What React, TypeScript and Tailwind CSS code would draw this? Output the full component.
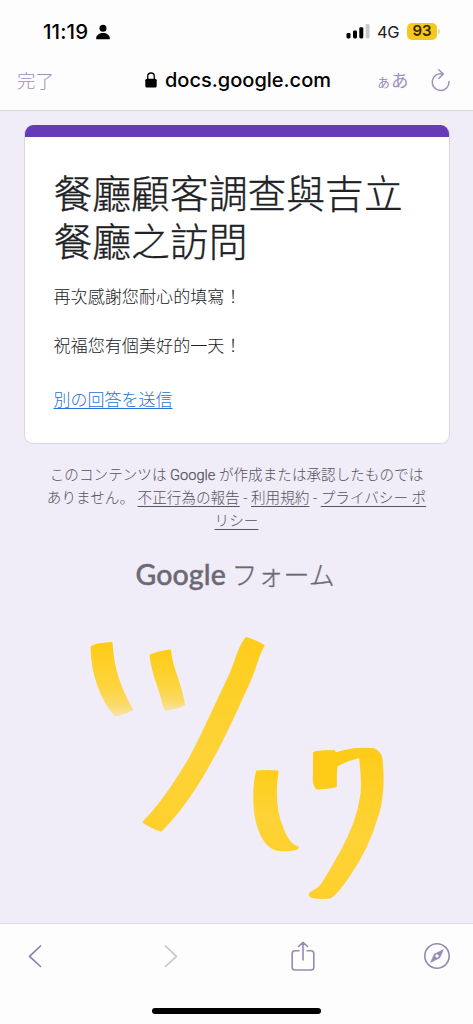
import type { ReactNode } from "react";

const CJK_TC = "font-['Noto_Sans_CJK_TC',sans-serif]";
const CJK_JP = "font-[Roboto,'Noto_Sans_CJK_JP',sans-serif]";

function StatusBar() {
  return (
    <div className="flex h-[62px] items-center justify-between pr-[33px] pl-[43px]">
      <div className="flex items-center gap-[5px] text-black">
        <span className="w-[48px] pt-px text-[20.5px] leading-6 font-medium tracking-[0.1px] whitespace-nowrap">11:19</span>
        <svg className="mt-[2px]" width="14" height="16" viewBox="0 0 14 16" fill="currentColor">
          <circle cx="7" cy="4.2" r="3.5" />
          <path d="M0.3 15.3C-0.6 11.5 3 9 7 9S14.600 11.5 13.700 15.3Z" />
        </svg>
      </div>
      <div className="flex items-center">
        <svg width="25" height="16" viewBox="0 0 25 16">
          <rect x="0.5" y="10" width="4" height="5.5" rx="1.4" />
          <rect x="7" y="7.5" width="4" height="8" rx="1.4" />
          <rect x="13.3" y="4.2" width="4" height="11.3" rx="1.4" />
          <rect x="19.6" y="1" width="4" height="14.5" rx="1.4" fill="#c9c9c9" />
        </svg>
        <span className="ml-[6px] w-[24px] pt-[2px] text-[16.5px] leading-5 tracking-[-0.4px] text-[#222]">4G</span>
        <span className="ml-[6px] flex h-[17px] w-[30px] items-center justify-center rounded-[5px] bg-[#f6c81e] pt-px text-[15px] font-semibold text-[#332600]">93</span>
        <span className="ml-px h-[5px] w-[2px] rounded-r-full bg-[#e4dcae]" />
      </div>
    </div>
  );
}

function NavBar() {
  return (
    <div className="flex h-[48px] items-start pt-[5px]">
      <button className="-mt-px ml-[17px] h-[28px] w-[38px] text-left font-['Noto_Sans_CJK_JP',sans-serif] text-[18.5px] leading-[28px] font-light whitespace-nowrap text-[#a08fbd]">完了</button>
      <div className="ml-[90px] flex h-[26px] items-center">
        <svg width="12" height="16" viewBox="0 0 12 16">
          <rect x="0.3" y="6.7" width="11.4" height="8.8" rx="1.5" />
          <path d="M2.7 7.5V4.3a3.3 3.3 0 0 1 6.6 0v3.2" fill="none" stroke="#000" strokeWidth="1.3" />
        </svg>
        <span className="ml-[8px] w-[166px] text-[20px] leading-[26px] font-medium whitespace-nowrap text-black">docs.google.com</span>
      </div>
      <div className="ml-[45px] flex h-[28px] w-[34px] items-baseline font-['Noto_Sans_CJK_JP',sans-serif] leading-[26px] whitespace-nowrap text-[#a08fbd]">
        <span className="text-[15px] leading-[26px]">ぁ</span>
        <span className="text-[17.500px] leading-[26px]">あ</span>
      </div>
      <svg className="ml-[21px]" width="20" height="26" viewBox="0 0 20 26" fill="none" stroke="#a08fbd" strokeWidth="1.5" strokeLinecap="round" strokeLinejoin="round">
        <path d="M18 14.500A8.4 8.4 0 1 1 11.6 6.9M7.8 2.8l4.5 4.2L8 11.2" />
      </svg>
    </div>
  );
}

function FooterLink({ children }: { children: ReactNode }) {
  return <a className="underline decoration-1 underline-offset-[3px]">{children}</a>;
}

function Handwriting() {
  return (
    <svg className="block" width="473" height="303" viewBox="0 620 473 303">
      <defs>
        <linearGradient id="fadeShort" x1="0" y1="0" x2="0" y2="1">
          <stop offset="0" stopColor="#fecb17" />
          <stop offset="0.6" stopColor="#fdd43c" />
          <stop offset="0.85" stopColor="#fbda66" />
          <stop offset="1" stopColor="#f8e2a0" />
        </linearGradient>
        <linearGradient id="fadeLong" x1="0" y1="0" x2="0" y2="1">
          <stop offset="0" stopColor="#fecd1b" />
          <stop offset="0.6" stopColor="#fdd337" />
          <stop offset="1" stopColor="#fed02b" />
        </linearGradient>
      </defs>
      <g strokeLinejoin="round" strokeWidth="2">
        <path d="M91.500 647Q95 644 111.500 643C113 668 119 687 132 709.500Q124 714 115 715C101 699 92 674 91.500 647Z" fill="url(#fadeShort)" stroke="url(#fadeShort)" />
        <path d="M150.500 655.500Q156 652.500 170 650.500C172 670 181 684 184 704.500Q176 709 166 709.500Q163 707 162 698C158 684 152 672 150.500 655.500Z" fill="url(#fadeShort)" stroke="url(#fadeShort)" />
        <path d="M246 638Q256 641 263.500 645.500C257 657 257 664 250 680C240 702 231 723 218 748C203 776 186 806 161 830.500Q152 828 143.500 822C160 806 174 785 190 758C200 740 212 713 229 677C236 663 237 650 246 638Z" fill="url(#fadeLong)" stroke="url(#fadeLong)" />
        <path d="M257 771.500Q267 770.500 277.500 771.500C275 788 275 810 282 827C286 838 290 845 298 847.500Q297 851 278 850C264 848 256 827 254.500 806Q253.500 785 257 771.500Z" fill="url(#fadeLong)" stroke="url(#fadeLong)" />
        <path d="M360 757C362 775 363 788 361 797C358 819 350 836 341 852C335 862 329 874 322 884C318 891 308 892 310 895.500Q313 899 330 897.500C337 894 343 884 350 874C361 858 371 837 376 820C383 802 384 777 381 756Q370 748 360 757Z" fill="url(#fadeLong)" stroke="url(#fadeLong)" />
        <path d="M314 753Q315 751 334 751L336 753.500C345 750 359 748 373 749Q381 751 381 762L376 758C366 754 350 758 336.500 766Q335.500 777 336 786Q332 787.500 317 788.500Q313 786 314 774Z" fill="#fecb19" stroke="#fecb19" />
      </g>
    </svg>
  );
}

function Toolbar() {
  return (
    <div className="h-[101px] border-t border-[#dedae3] bg-[#fdfdfd]">
      <div className="flex h-[65px] items-center pb-[2px] pl-[28px]">
        <svg width="14" height="24" viewBox="0 0 14 24" fill="none" stroke="#8c7eaa" strokeWidth="1.7" strokeLinecap="round" strokeLinejoin="round">
          <path d="M12.500 2 1.500 12.300 12.500 22.500" />
        </svg>
        <svg className="ml-[122px]" width="14" height="24" viewBox="0 0 14 24" fill="none" stroke="#c7c6c9" strokeWidth="1.7" strokeLinecap="round" strokeLinejoin="round">
          <path d="M1.500 2 12.500 12.300 1.500 22.500" />
        </svg>
        <svg className="ml-[113px]" width="24" height="32" viewBox="0 0 24 32" fill="none" stroke="#9689b2" strokeWidth="1.6" strokeLinecap="round" strokeLinejoin="round">
          <path d="M8 10.800H4a2.800 2.800 0 0 0-2.800 2.800V27.200A2.800 2.800 0 0 0 4 30H20a2.800 2.800 0 0 0 2.800-2.800V13.600A2.800 2.800 0 0 0 20 10.800H16M12 20V2.300M7.500 6.500 12 2.300 16.500 6.500" />
        </svg>
        <svg className="ml-[108px]" width="28" height="28" viewBox="0 0 28 28" fill="none" stroke="#9689b2" strokeWidth="1.600">
          <circle cx="14" cy="14" r="12.200" />
          <path d="M20.500 7.500 16.700 16 7.500 20.500 11.400 12Z" fill="#9689b2" strokeWidth="0.500" />
          <circle cx="14" cy="14" r="1.700" fill="#fdfdfd" stroke="none" />
        </svg>
      </div>
      <div className="mx-auto mt-[19px] h-[6px] w-[169px] rounded-full bg-black" />
    </div>
  );
}

export default function App() {
  return (
    <div className="flex h-[1024px] w-[473px] flex-col overflow-hidden bg-[#f0ecf8] font-[Inter,sans-serif]">
      <header className="h-[111px] shrink-0 border-b border-[#d9d6e2] bg-[#fdfdfd]">
        <StatusBar />
        <NavBar />
      </header>

      <main className="flex h-[812px] shrink-0 flex-col">
        <section className="mx-[24px] mt-[14px] h-[319px] w-[426px] shrink-0 overflow-hidden rounded-[9px] border border-t-0 border-[#dad6e1] bg-white">
          <div className="-mx-px h-[12px] bg-[#673ab7]" />
          <div className={`px-[28.500px] pt-[30px] text-[#202124] ${CJK_TC}`}>
            <h1 className="w-[352px] text-[38.8px] leading-[48px] font-light [-webkit-text-stroke:0.35px_#202124]">餐廳顧客調查與吉立餐廳之訪問</h1>
            <div className="mt-[21px] text-[17.1px] leading-[24.250px] font-light whitespace-pre-line">{"再次感謝您耐心的填寫！\n\n祝福您有個美好的一天！"}</div>
            <a className="mt-[29px] block font-['Noto_Sans_CJK_JP',sans-serif] text-[17px] leading-[25px] font-light text-[#2a70d5] underline decoration-1 underline-offset-[2px]">別の回答を送信</a>
          </div>
        </section>

        <p className={`mt-[20px] text-center text-[14.6px] leading-[23px] font-light text-[#56535e] ${CJK_JP}`}>
          このコンテンツは <span className="[-webkit-text-stroke:0.25px_#56535e]">Google</span> が作成または承認したものでは<br />
          ありません。 <FooterLink>不正行為の報告</FooterLink> - <FooterLink>利用規約</FooterLink> - <FooterLink>プライバシー ポ<br />リシー</FooterLink>
        </p>

        <div className="mt-[23px] flex h-[36px] items-center justify-center pr-[2px] text-[#6d6974]">
          <span className="w-[91px] font-[Lato,sans-serif] text-[28.500px] leading-[36px] font-medium tracking-[0.1px] [-webkit-text-stroke:0.4px_#6d6974]">Google</span>
          <span className="ml-[5px] w-[104px] font-['Noto_Sans_CJK_JP',sans-serif] text-[26px] leading-[36px] font-light whitespace-nowrap [-webkit-text-stroke:0.3px_#6d6974]">フォーム</span>
        </div>

        <div className="mt-auto">
          <Handwriting />
        </div>
      </main>

      <Toolbar />
    </div>
  );
}
